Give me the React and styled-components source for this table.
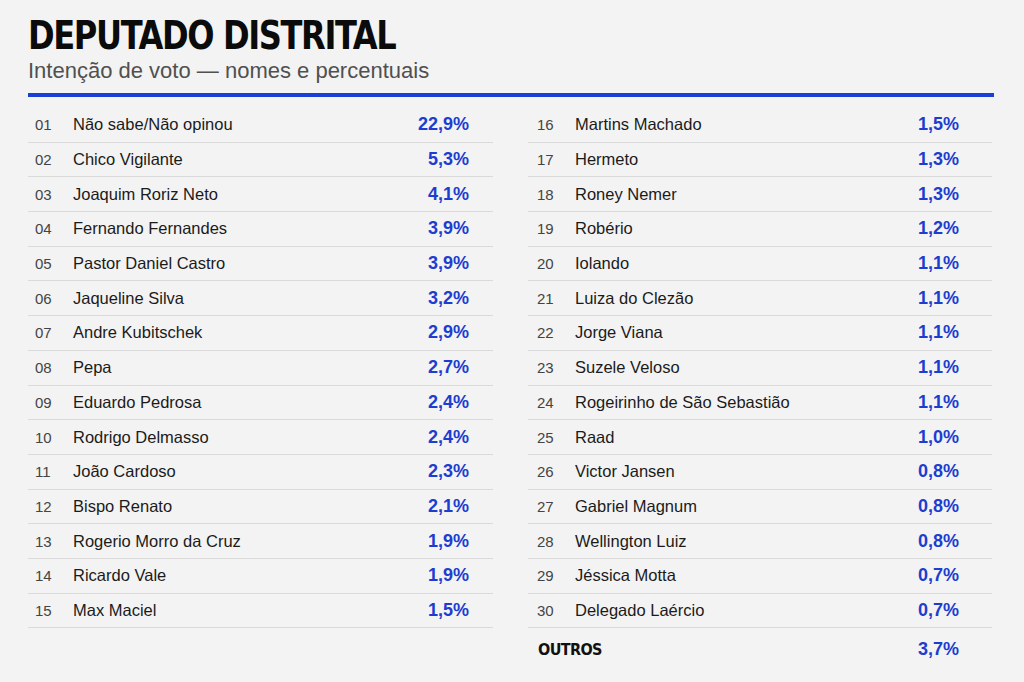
import React from "react";
import styled, { createGlobalStyle } from "styled-components";

const GlobalStyle = createGlobalStyle`
  html, body {
    margin: 0;
    padding: 0;
    background: #f3f3f3;
  }
  body {
    font-family: "Liberation Sans", Arial, sans-serif;
    color: #1b1b1b;
  }
`;

const left = [
  ["01", "Não sabe/Não opinou", "22,9%"],
  ["02", "Chico Vigilante", "5,3%"],
  ["03", "Joaquim Roriz Neto", "4,1%"],
  ["04", "Fernando Fernandes", "3,9%"],
  ["05", "Pastor Daniel Castro", "3,9%"],
  ["06", "Jaqueline Silva", "3,2%"],
  ["07", "Andre Kubitschek", "2,9%"],
  ["08", "Pepa", "2,7%"],
  ["09", "Eduardo Pedrosa", "2,4%"],
  ["10", "Rodrigo Delmasso", "2,4%"],
  ["11", "João Cardoso", "2,3%"],
  ["12", "Bispo Renato", "2,1%"],
  ["13", "Rogerio Morro da Cruz", "1,9%"],
  ["14", "Ricardo Vale", "1,9%"],
  ["15", "Max Maciel", "1,5%"],
];

const right = [
  ["16", "Martins Machado", "1,5%"],
  ["17", "Hermeto", "1,3%"],
  ["18", "Roney Nemer", "1,3%"],
  ["19", "Robério", "1,2%"],
  ["20", "Iolando", "1,1%"],
  ["21", "Luiza do Clezão", "1,1%"],
  ["22", "Jorge Viana", "1,1%"],
  ["23", "Suzele Veloso", "1,1%"],
  ["24", "Rogeirinho de São Sebastião", "1,1%"],
  ["25", "Raad", "1,0%"],
  ["26", "Victor Jansen", "0,8%"],
  ["27", "Gabriel Magnum", "0,8%"],
  ["28", "Wellington Luiz", "0,8%"],
  ["29", "Jéssica Motta", "0,7%"],
  ["30", "Delegado Laércio", "0,7%"],
];

const Page = styled.div`
  width: 1024px;
  height: 682px;
  box-sizing: border-box;
  padding: 14px 30px 0 28px;
  overflow: hidden;
`;

const Title = styled.h1`
  margin: 0;
  font-family: "DejaVu Sans Condensed", "Liberation Sans", sans-serif;
  font-weight: 700;
  font-size: 39px;
  line-height: 44px;
  letter-spacing: -1.5px;
  color: #0b0b0b;
  transform: scaleX(0.915);
  transform-origin: left center;
`;

const Subtitle = styled.p`
  margin: 0;
  font-size: 22px;
  line-height: 26px;
  color: #505050;
`;

const Rule = styled.div`
  height: 4px;
  margin-top: 9px;
  background: #1a3fd4;
`;

const Columns = styled.div`
  display: grid;
  grid-template-columns: 465px 464px;
  column-gap: 35px;
  margin-top: 11px;
`;

const Column = styled.div`
  display: flex;
  flex-direction: column;
`;

const Row = styled.div`
  display: flex;
  align-items: center;
  height: ${(p) => (p.$last ? "42px" : "34.7px")};
  box-sizing: border-box;
  padding: 0 ${(p) => p.$padRight}px 0 ${(p) => p.$padLeft}px;
  border-bottom: ${(p) => (p.$last ? "none" : "1px solid #dadada")};
`;

const Num = styled.span`
  width: 38px;
  flex: none;
  font-size: 15px;
  color: #444;
`;

const Name = styled.span`
  flex: 1;
  font-size: 16.5px;
  color: #1b1b1b;
`;

const Others = styled.span`
  flex: 1;
  font-family: "DejaVu Sans Condensed", "Liberation Sans", sans-serif;
  font-weight: 700;
  font-size: 16px;
  letter-spacing: -0.6px;
  color: #111;
`;

const Pct = styled.span`
  font-weight: 700;
  font-size: 18px;
  color: #1c3dd0;
`;

function List({ items, padLeft, padRight, children }) {
  return (
    <Column>
      {items.map(([n, name, pct]) => (
        <Row key={n} $padLeft={padLeft} $padRight={padRight}>
          <Num>{n}</Num>
          <Name>{name}</Name>
          <Pct>{pct}</Pct>
        </Row>
      ))}
      {children}
    </Column>
  );
}

export default function App() {
  return (
    <Page>
      <GlobalStyle />
      <Title>DEPUTADO DISTRITAL</Title>
      <Subtitle>Intenção de voto — nomes e percentuais</Subtitle>
      <Rule />
      <Columns>
        <List items={left} padLeft={7} padRight={24} />
        <List items={right} padLeft={9} padRight={33}>
          <Row $padLeft={10} $padRight={33} $last>
            <Others>OUTROS</Others>
            <Pct>3,7%</Pct>
          </Row>
        </List>
      </Columns>
    </Page>
  );
}
